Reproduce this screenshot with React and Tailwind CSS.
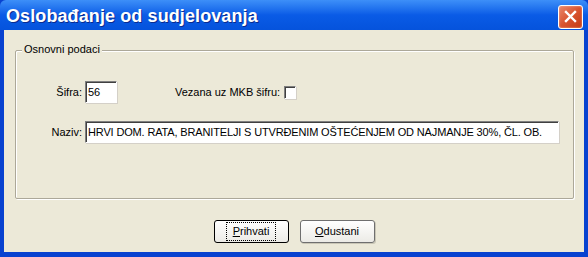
import React, { useState } from "react";

const ui = { fontFamily: '"Liberation Sans", Arial, sans-serif' };

const CloseButton = () => (
  <button
    type="button"
    className="w-[25px] h-[24px] rounded-[3px] border border-white bg-gradient-to-br from-[#e8876a] via-[#d9532f] to-[#c23a12] flex items-center justify-center shadow-[inset_0_0_2px_#f5b59f]"
  >
    <svg width="13" height="13" viewBox="0 0 13 13">
      <path d="M2 2 L11 11 M11 2 L2 11" stroke="#fff" strokeWidth="2.4" strokeLinecap="square" />
    </svg>
  </button>
);

const Field = ({ value, className }) => (
  <div
    className={`h-[22px] bg-white border border-t-[#7f7f7f] border-l-[#7f7f7f] border-b-[#fff] border-r-[#fff] shadow-[inset_1px_1px_0_#404040,1px_1px_0_#d4d0c8] flex items-center pl-[2px] text-[11px] tracking-[-0.15px] text-black whitespace-nowrap overflow-hidden ${className}`}
  >
    {value}
  </div>
);

const Button = ({ label, mnemonic, primary }) => {
  const rest = label.slice(1);
  return (
    <button
      type="button"
      className={`w-[75px] h-[23px] rounded-[3px] bg-gradient-to-b from-[#ffffff] to-[#ecebe6] text-[11px] text-black flex items-center justify-center ${
        primary ? "border border-black" : "border border-[#6f6f6f] shadow-[1px_1px_0_#c9c6b6]"
      }`}
    >
      <span
        className={`px-[6px] h-[17px] flex items-center ${
          primary ? "outline outline-1 outline-dotted outline-black" : ""
        }`}
      >
        <span className="underline">{mnemonic}</span>
        {rest}
      </span>
    </button>
  );
};

export default function App() {
  const [vezana, setVezana] = useState(false);

  return (
    <div style={ui} className="w-[588px] h-[257px] bg-[#0842d0] flex flex-col select-none">
      <div className="h-[30px] shrink-0 bg-gradient-to-b from-[#3d8ff8] via-[#0a5be6] to-[#0553dc] rounded-t-[6px] flex items-center justify-between pl-[6px] pr-[5px] pt-[3px]">
        <span className="text-white font-bold text-[18px] tracking-[0.1px] [text-shadow:1px_1px_0_#0a2b8f]">
          Oslobađanje od sudjelovanja
        </span>
        <CloseButton />
      </div>

      <div className="flex-1 mx-[4px] mb-[5px] bg-[#ece9d8] flex flex-col">
        <div className="mt-[20px] ml-[11px] mr-[10px] h-[149px] border border-[#aca899] shadow-[inset_1px_1px_0_#fff,1px_1px_0_#fff] rounded-[2px] flex flex-col">
          <span className="-mt-[8px] ml-[6px] px-[2px] w-fit bg-[#ece9d8] text-[11px] leading-[13px] text-black">
            Osnovni podaci
          </span>

          <div className="mt-[25px] flex items-center">
            <span className="w-[66px] text-right text-[11px] text-black">Šifra:</span>
            <Field value="56" className="ml-[3px] w-[32px]" />
            <span className="ml-[58px] text-[11px] text-black">Vezana uz MKB šifru:</span>
            <button
              type="button"
              onClick={() => setVezana(!vezana)}
              className="ml-[4px] w-[12px] h-[13px] bg-white border border-t-[#7f7f7f] border-l-[#7f7f7f] border-b-[#fff] border-r-[#fff] shadow-[inset_1px_1px_0_#404040,1px_1px_0_#d4d0c8] flex items-center justify-center"
            >
              {vezana && (
                <svg width="8" height="8" viewBox="0 0 8 8">
                  <path d="M1 4 L3 6 L7 1" stroke="#000" strokeWidth="1.5" fill="none" />
                </svg>
              )}
            </button>
          </div>

          <div className="mt-[18px] flex items-center">
            <span className="w-[66px] text-right text-[11px] text-black">Naziv:</span>
            <Field
              value="HRVI DOM. RATA, BRANITELJI S UTVRĐENIM OŠTEĆENJEM OD NAJMANJE 30%, ČL. OB."
              className="ml-[3px] w-[474px]"
            />
          </div>
        </div>

        <div className="mt-[21px] flex justify-center gap-[11px]">
          <Button label="Prihvati" mnemonic="P" primary />
          <Button label="Odustani" mnemonic="O" />
        </div>
      </div>
    </div>
  );
}
